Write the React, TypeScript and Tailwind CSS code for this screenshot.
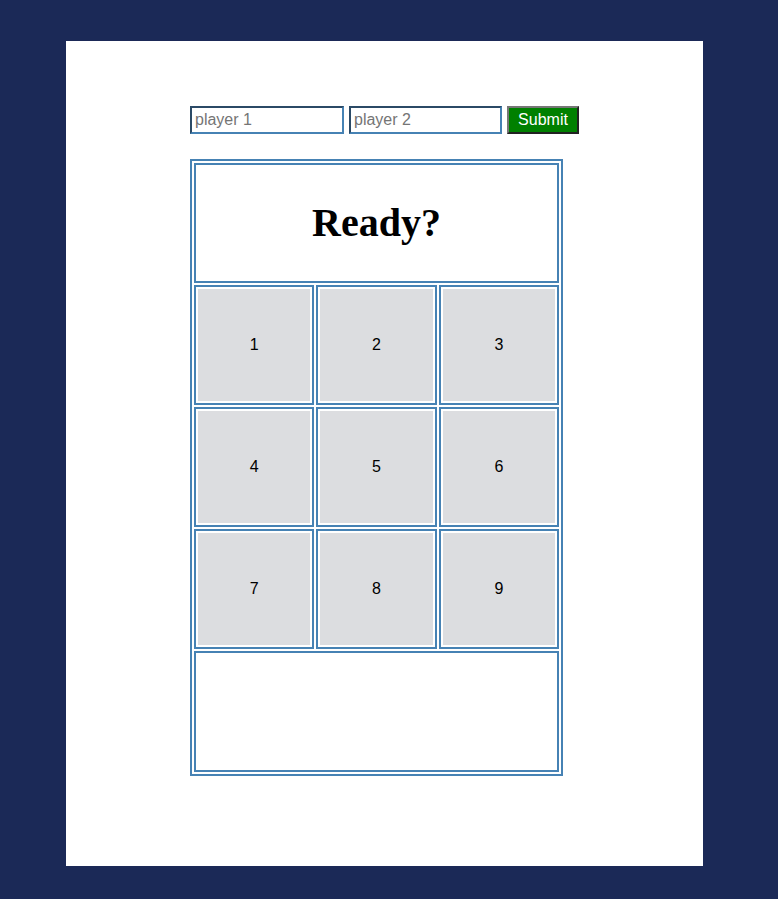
import React from 'react';

const cells = ['1', '2', '3', '4', '5', '6', '7', '8', '9'];

export default function App() {
  return (
    <div className="min-h-[899px] bg-[#1b2957] pt-[41px] pb-[33px] pl-[66px] font-['Liberation_Sans',Arial,sans-serif]">
      <div className="w-[637px] h-[825px] bg-white pt-[65px]">
        <div className="w-[389px] mx-auto">
          <form className="flex gap-[5px]" onSubmit={(e) => e.preventDefault()}>
            <input
              placeholder="player 1"
              className="w-[154px] h-[28px] px-[3px] text-[16px] text-black placeholder:text-[#757575] border-2 border-[#4682b4] border-t-[#2b4a66] border-l-[#2b4a66] outline-none"
            />
            <input
              placeholder="player 2"
              className="w-[153px] h-[28px] px-[3px] text-[16px] text-black placeholder:text-[#757575] border-2 border-[#4682b4] border-t-[#2b4a66] border-l-[#2b4a66] outline-none"
            />
            <button
              type="submit"
              className="w-[72px] h-[28px] bg-[#008000] text-white text-[16px] border-2 border-[#222] border-t-[#767676] border-l-[#767676]"
            >
              Submit
            </button>
          </form>

          <div className="mt-[25px] w-[373px] border-2 border-[#4682b4] p-[2px] flex flex-col gap-[2px]">
            <div className="h-[120px] border-2 border-[#4682b4] flex items-center justify-center">
              <h1 className="font-['Liberation_Serif','Times_New_Roman',serif] font-bold text-[40px] leading-none text-black">
                Ready?
              </h1>
            </div>
            <div className="grid grid-cols-3 gap-[2px]">
              {cells.map((n) => (
                <div key={n} className="h-[120px] border-2 border-[#4682b4] p-[2px]">
                  <div className="h-full bg-[#dcdde0] flex items-center justify-center text-[16px] text-black">
                    {n}
                  </div>
                </div>
              ))}
            </div>
            <div className="h-[121px] border-2 border-[#4682b4]" />
          </div>
        </div>
      </div>
    </div>
  );
}
